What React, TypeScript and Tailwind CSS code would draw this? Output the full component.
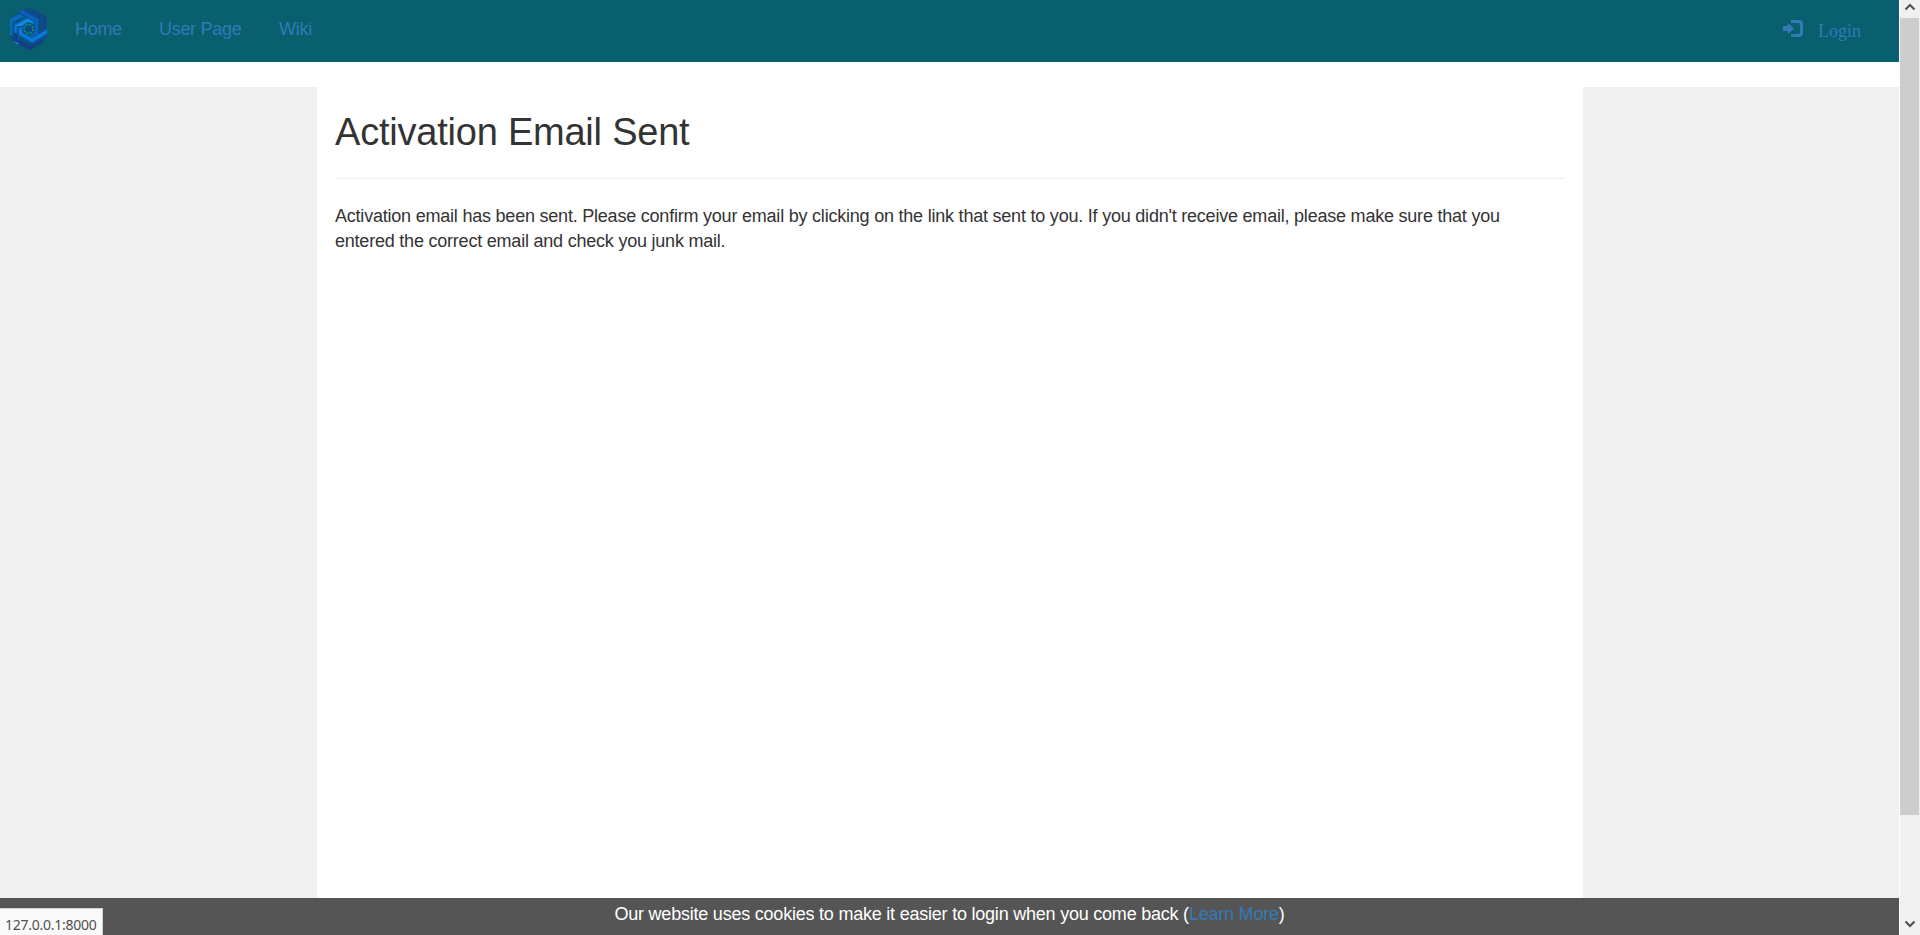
const arms = [
  { angle: 0, outer: "#0869bd", inner: "#078be5", edge: "#0a5eae" },
  { angle: 120, outer: "#12458e", inner: "#0b62b8", edge: "#0d4c9c" },
  { angle: 240, outer: "#143d86", inner: "#0879d6", edge: "#0c52a6" },
];

function Logo() {
  return (
    <svg className="h-11 w-[37px]" viewBox="-18.500 -22 37 44">
      <clipPath id="hexagon">
        <path d="M0-22 18.500-12V11L0 22-18.500 11V-12Z" />
      </clipPath>
      <g clipPath="url(#hexagon)">
        <path d="M0-22 18.500-12V11L0 22-18.500 11V-12Z" fill="#0a4f83" opacity=".55" />
        {arms.map((arm) => (
          <g key={arm.angle} transform={`rotate(${arm.angle})`} fill="none">
            <path d="M-17.500 6V-8L-3-16 3-13" stroke={arm.outer} strokeWidth="4" />
            <path d="M-12 18V-3L0-10 7-6" stroke={arm.edge} strokeWidth="6.500" />
            <path d="M-11.500 15V-2.500L0-9 5-6" stroke={arm.inner} strokeWidth="3.500" />
            <path d="M-15.500 12V-5L-1-13 5-10" stroke="#08506c" strokeWidth="1" />
          </g>
        ))}
        <circle r="6.500" fill="#08566f" />
        <circle r="4.500" fill="none" stroke="#20869b" strokeWidth="1.500" strokeDasharray="2.200 1.300" />
        <circle r="3" fill="#0a4c86" />
      </g>
    </svg>
  );
}

function LoginIcon() {
  return (
    <svg className="h-[17px] w-5" viewBox="0 0 20 17" fill="#337ab7">
      <path d="M0 6H5V3L11 8.500 5 14V11H0Z" />
      <path d="M8 0H16Q20 0 20 4V13Q20 17 16 17H8V14H15Q17 14 17 12V5Q17 3 15 3H8Z" />
    </svg>
  );
}

function Chevron({ down = false }: { down?: boolean }) {
  return (
    <svg className="h-[8px] w-[10px]" viewBox="0 0 10 8" fill="none" stroke="#505050" strokeWidth="2">
      <path d={down ? "M.5 1.500 5 6 9.500 1.500" : "M.5 6.500 5 2 9.500 6.500"} />
    </svg>
  );
}

export default function App() {
  return (
    <div className="relative flex h-[935px] w-full overflow-hidden bg-white font-['Liberation_Sans',Arial,sans-serif] text-[18px] leading-[25px] text-[#333]">
      <div className="flex w-[1899px] shrink-0 flex-col">
        <nav className="flex h-[62px] shrink-0 items-start bg-[#085f6d] text-[#337ab7]">
          <a className="ml-[10px] mt-[7px]"><Logo /></a>
          <a className="ml-[28px] mt-[17px] w-[84px] tracking-[-0.3px]">Home</a>
          <a className="mt-[17px] w-[120px] tracking-[-0.3px]">User Page</a>
          <a className="mt-[17px] tracking-[-0.22px]">Wiki</a>
          <a className="ml-auto mr-[38px] mt-[20px] flex">
            <LoginIcon />
            <span className="ml-[15px] mt-[-1px] font-['Liberation_Serif',serif]">Login</span>
          </a>
        </nav>
        <div className="mt-[25px] flex min-h-0 flex-1">
          <aside className="w-[317px] shrink-0 bg-[#f0f0f0]" />
          <main className="w-[1266px] shrink-0 pl-[18px] pr-[19px]">
            <h1 className="mt-[20px] text-[38px] leading-[50px] tracking-[-0.22px] whitespace-nowrap">Activation Email Sent</h1>
            <hr className="mt-[21px] border-[#eee]" />
            <p className="mt-[25px] tracking-[-0.216px] whitespace-nowrap">
              Activation email has been sent. Please confirm your email by clicking on the link that sent to you. If you didn't receive email, please make sure that you
              <br />
              entered the correct email and check you junk mail.
            </p>
          </main>
          <aside className="flex-1 bg-[#f0f0f0]" />
        </div>
        <footer className="flex h-[37px] shrink-0 justify-center bg-[#555] pt-1 text-white">
          <p className="tracking-[-0.22px] whitespace-nowrap">
            Our website uses cookies to make it easier to login when you come back (<a className="text-[#337ab7]">Learn More</a>)
          </p>
        </footer>
      </div>
      <div className="ml-px flex w-5 flex-col bg-[#f0f0f0]">
        <div className="flex h-[18px] shrink-0 justify-center pt-[3px] pr-px"><Chevron /></div>
        <div className="h-[797px] w-[19px] shrink-0 bg-[#cdcdcd]" />
        <div className="mt-auto flex h-[15px] justify-center pr-px"><Chevron down /></div>
      </div>
      <div className="absolute bottom-0 left-0 h-[27px] w-[103px] border-t border-r border-[#d0d0d0] bg-[#f9f9f9] pl-[5px] font-['Noto_Sans',sans-serif] text-[14px] leading-[31px] tracking-[-0.25px] whitespace-nowrap text-[#505050]">
        127.0.0.1:8000
      </div>
    </div>
  );
}
